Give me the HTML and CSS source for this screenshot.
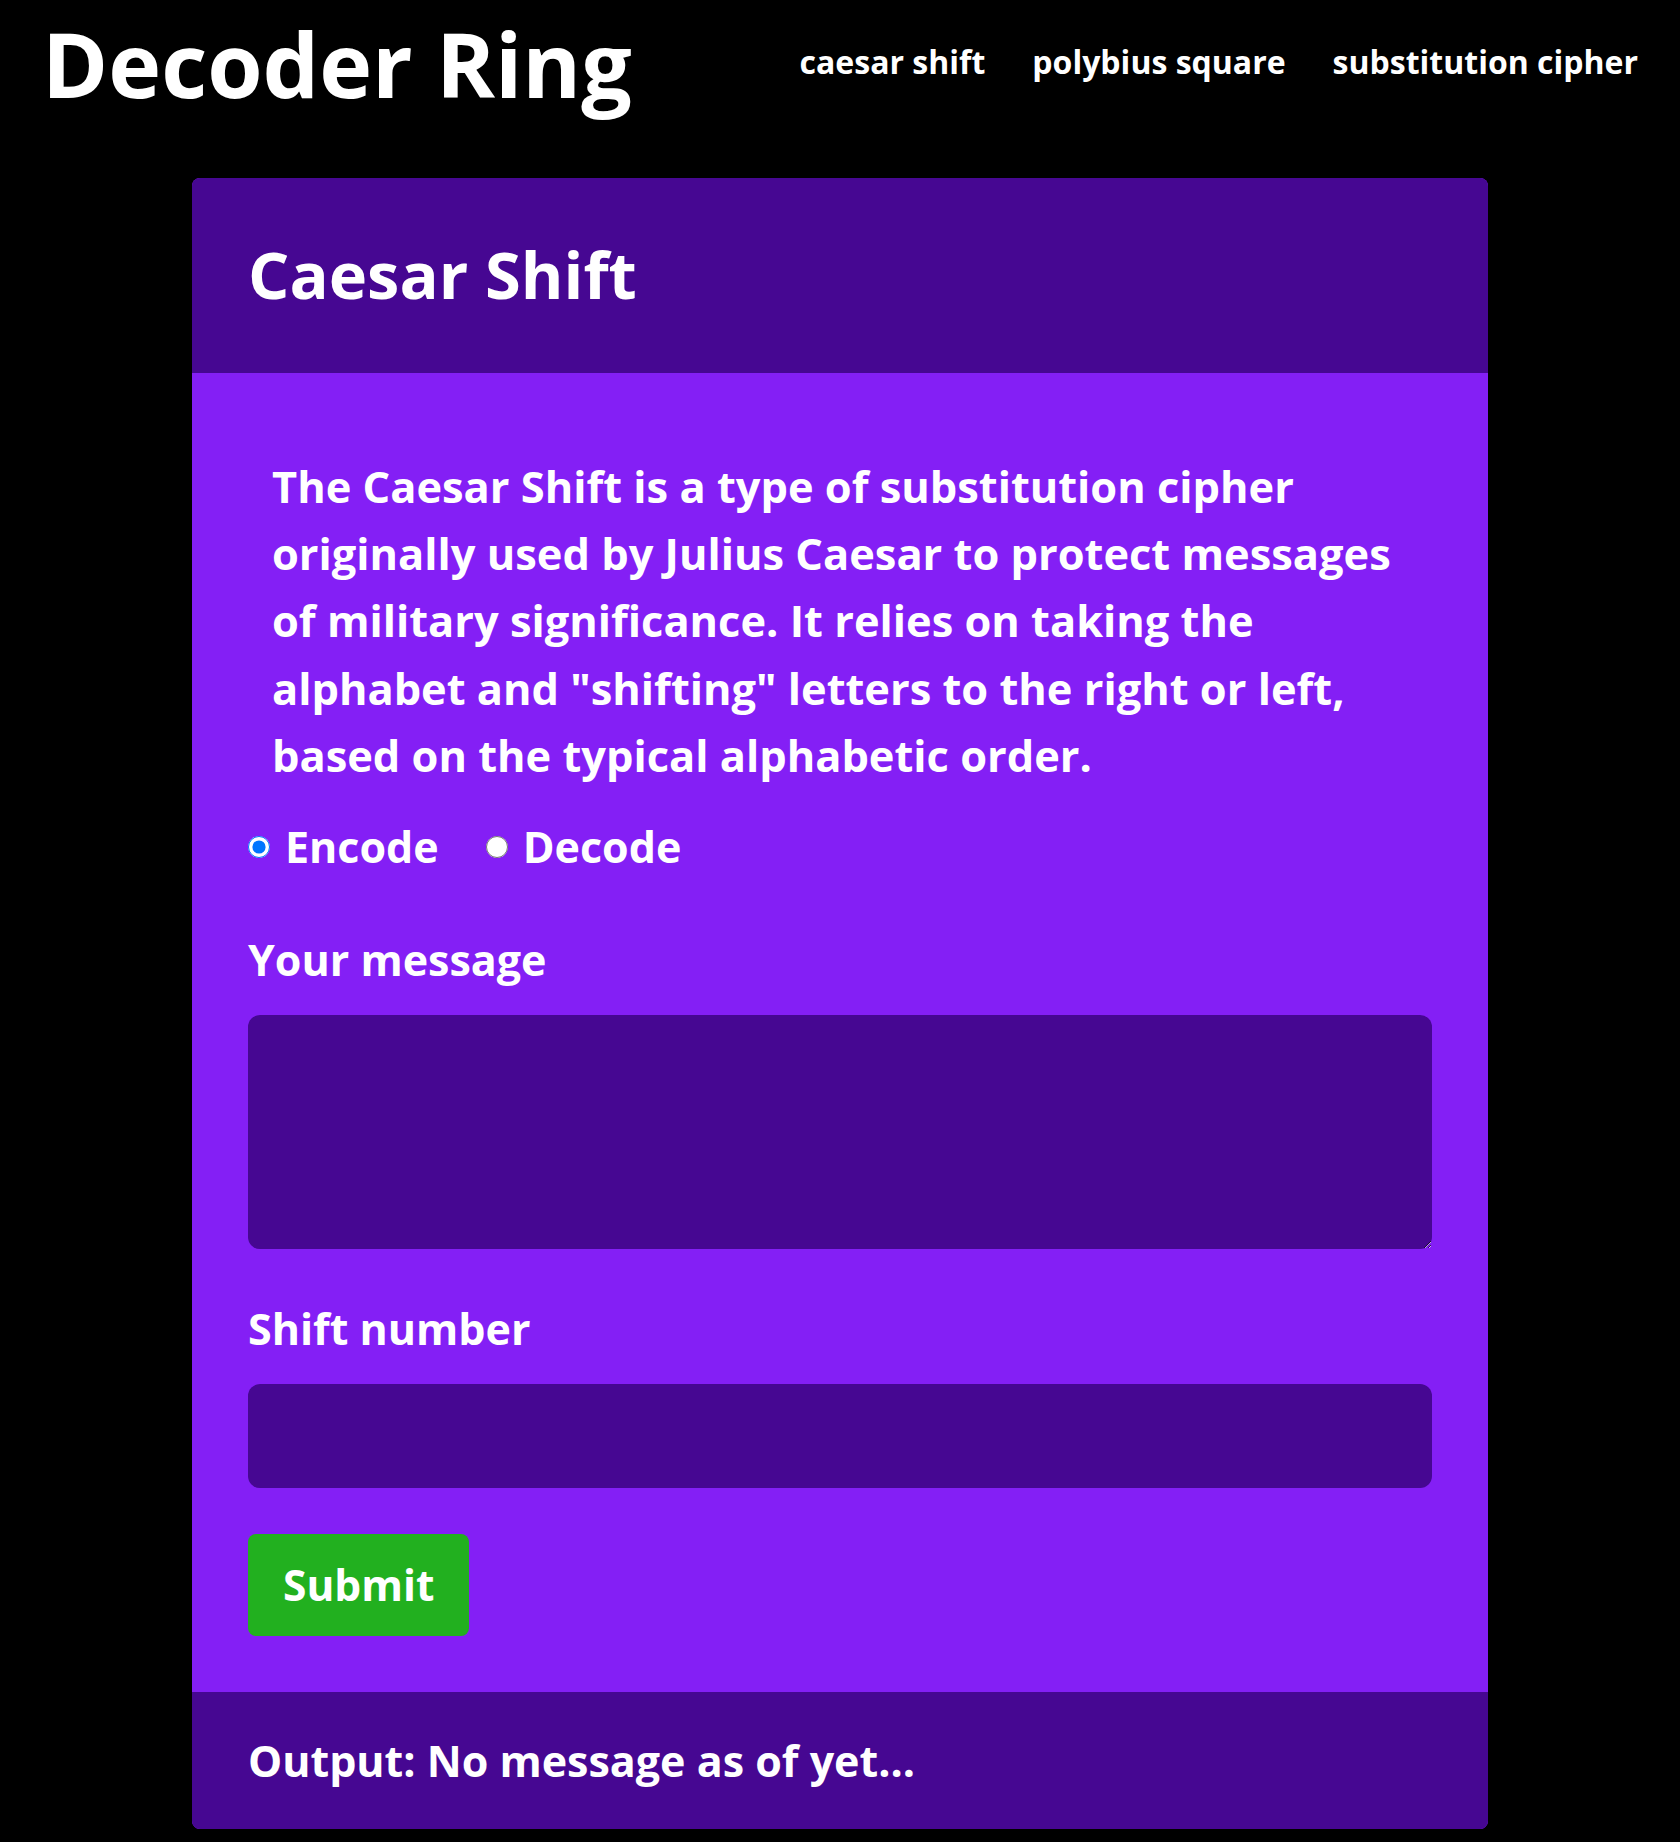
FILE: index.html
```html
<!DOCTYPE html>
<html lang="en">
<head>
<meta charset="utf-8">
<title>Decoder Ring</title>
<link rel="stylesheet" href="styles.css">
</head>
<body>
<header class="topbar">
  <div class="brand">Decoder Ring</div>
  <nav class="nav">
    <a class="nav-link" href="#">caesar shift</a>
    <a class="nav-link" href="#">polybius square</a>
    <a class="nav-link" href="#">substitution cipher</a>
  </nav>
</header>
<main class="container">
  <section class="card">
    <div class="card-header">
      <h1 class="card-title">Caesar Shift</h1>
    </div>
    <form class="card-body">
      <p class="intro">The Caesar Shift is a type of substitution cipher originally used by Julius Caesar to protect messages of military significance. It relies on taking the alphabet and "shifting" letters to the right or left, based on the typical alphabetic order.</p>
      <div class="mode">
        <label class="radio"><input class="radio-input" type="radio" name="mode" checked><span>Encode</span></label>
        <label class="radio"><input class="radio-input" type="radio" name="mode"><span>Decode</span></label>
      </div>
      <div class="field">
        <label class="field-label" for="message">Your message</label>
        <textarea class="field-input field-area" id="message"></textarea>
      </div>
      <div class="field">
        <label class="field-label" for="shift">Shift number</label>
        <input class="field-input field-line" id="shift" type="number">
      </div>
      <button class="submit" type="button">Submit</button>
    </form>
    <div class="card-footer">Output: No message as of yet...</div>
  </section>
</main>
</body>
</html>
```
FILE: styles.css
```css
* { box-sizing: border-box; }

html, body {
  margin: 0;
  background: #000;
  color: #fff;
  font-family: "Open Sans", "Noto Sans", sans-serif;
  font-weight: 700;
}

.topbar {
  display: flex;
  justify-content: space-between;
  align-items: flex-start;
  padding: 10px 42px 0 42px;
}

.brand {
  font-size: 89.5px;
  line-height: 106.6px;
}

.nav {
  display: flex;
  gap: 47px;
  margin-top: 27.6px;
}

.nav-link {
  color: #fff;
  text-decoration: none;
  font-size: 32px;
  line-height: 48px;
}

.container {
  max-width: 1296px;
  margin: 0 auto;
  padding-top: 61.4px;
}

.card {
  border-radius: 8px;
  overflow: hidden;
  background: #841ff5;
}

.card-header {
  background: #460792;
  padding: 57px 56px 60px;
}

.card-title {
  margin: 0;
  font-size: 65px;
  line-height: 78px;
  font-weight: 700;
}

.card-body {
  padding: 56px 56px 56px;
}

.intro {
  margin: 0;
  padding: 24px;
  font-size: 43.4px;
  line-height: 67.2px;
}

.mode {
  display: flex;
  align-items: center;
  gap: 47px;
  height: 67px;
  margin-bottom: 46px;
  font-size: 43px;
}

.radio {
  display: flex;
  align-items: center;
  gap: 15px;
}

.radio-input {
  width: 22px;
  height: 22px;
  margin: 0;
}

.field {
  margin-bottom: 46px;
}

.field-label {
  display: block;
  font-size: 43px;
  line-height: 67px;
  margin-bottom: 22px;
}

.field-input {
  display: block;
  width: 100%;
  border: none;
  border-radius: 12px;
  background: #460792;
  color: #fff;
  font-family: inherit;
  font-size: 32px;
  padding: 12px 16px;
  outline: none;
}

.field-area {
  height: 234px;
  color-scheme: dark;
}

.field-line {
  height: 104px;
}

.submit {
  display: block;
  border: none;
  border-radius: 8px;
  background: #22b01f;
  color: #fff;
  font-family: inherit;
  font-weight: 700;
  font-size: 42.5px;
  line-height: 67px;
  padding: 17px 35px 18px;
}

.card-footer {
  background: #460792;
  padding: 35px 56px;
  font-size: 43px;
  line-height: 67px;
}
```
